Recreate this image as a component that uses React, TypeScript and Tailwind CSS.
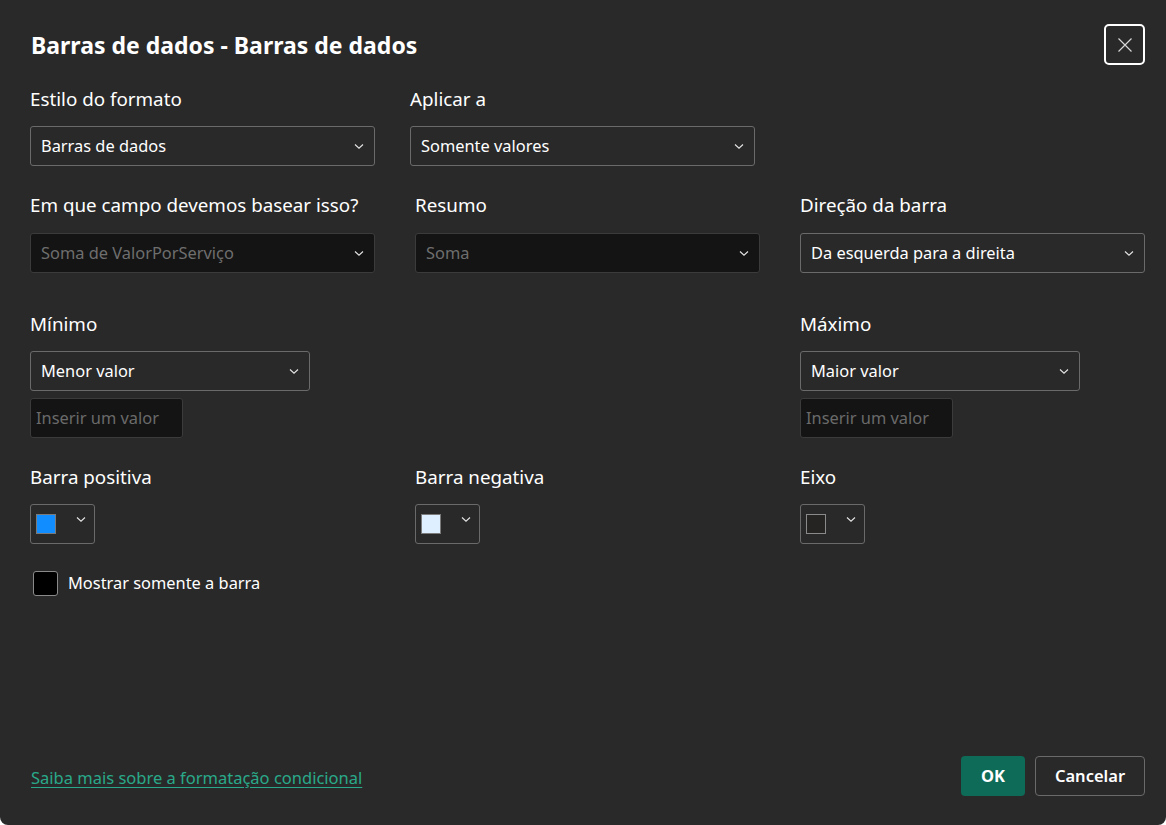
import React from "react";

function Chevron() {
  return (
    <svg width="12" height="12" viewBox="0 0 12 12" fill="none" className="shrink-0">
      <path d="M2 4.5 6 8.2 10 4.5" stroke="#e6e6e6" strokeWidth="1.1" />
    </svg>
  );
}

function Select({
  value,
  width,
  disabled = false,
}: {
  value: string;
  width: string;
  disabled?: boolean;
}) {
  return (
    <div
      className={`flex h-10 items-center justify-between rounded-[3px] border pl-[10px] pr-[9px] text-[16.4px] ${width} ${
        disabled
          ? "border-[#3b3b3b] bg-[#141414] text-[#6e6e6e]"
          : "border-[#6a6a6a] bg-[#292929] text-white"
      }`}
    >
      <span>{value}</span>
      <Chevron />
    </div>
  );
}

function ValueInput() {
  return (
    <div className="mt-[7px] flex h-10 w-[153px] items-center rounded-[3px] border border-[#3b3b3b] bg-[#141414] px-[5px] text-[16.4px] text-[#6a6a6a]">
      Inserir um valor
    </div>
  );
}

function ColorPicker({ color, dark = false }: { color: string; dark?: boolean }) {
  return (
    <div className="flex h-10 w-[65px] items-center justify-between rounded-[3px] border border-[#6a6a6a] pl-[5px] pr-[7px]">
      <div
        className={`h-5 w-5 border ${dark ? "border-[#8a8a8a]" : "border-[#7a7a7a]"}`}
        style={{ backgroundColor: color }}
      />
      <div className="-mt-[10px]">
        <Chevron />
      </div>
    </div>
  );
}

function Label({ children }: { children: React.ReactNode }) {
  return <div className="h-[26px] text-[18.8px] leading-[26px] text-white">{children}</div>;
}

export default function App() {
  return (
    <div
      className="relative h-[825px] w-[1166px] overflow-hidden rounded-b-[8px] bg-[#292929] text-white"
      style={{ fontFamily: '"Segoe UI", "Noto Sans", "Open Sans", sans-serif' }}
    >
      <div className="flex items-start justify-between pl-[31px] pr-[21px] pt-[24px]">
        <h1 className="mt-[6px] text-[23px] font-bold leading-[30px]">
          Barras de dados - Barras de dados
        </h1>
        <button className="flex h-[41px] w-[41px] items-center justify-center rounded-[5px] border-2 border-white">
          <svg width="16" height="16" viewBox="0 0 16 16" fill="none">
            <path d="M1.5 1.5 14.5 14.5M14.5 1.5 1.5 14.5" stroke="#d6d6d6" strokeWidth="1.2" />
          </svg>
        </button>
      </div>

      <div className="px-[30px]">
        <div className="mt-[21px] flex gap-[35px]">
          <div>
            <Label>Estilo do formato</Label>
            <div className="mt-[14px]">
              <Select value="Barras de dados" width="w-[345px]" />
            </div>
          </div>
          <div>
            <Label>Aplicar a</Label>
            <div className="mt-[14px]">
              <Select value="Somente valores" width="w-[345px]" />
            </div>
          </div>
        </div>

        <div className="mt-[26px] grid grid-cols-[385px_385px_345px]">
          <div>
            <Label>Em que campo devemos basear isso?</Label>
            <div className="mt-[15px]">
              <Select value="Soma de ValorPorServiço" width="w-[345px]" disabled />
            </div>
          </div>
          <div>
            <Label>Resumo</Label>
            <div className="mt-[15px]">
              <Select value="Soma" width="w-[345px]" disabled />
            </div>
          </div>
          <div>
            <Label>Direção da barra</Label>
            <div className="mt-[15px]">
              <Select value="Da esquerda para a direita" width="w-[345px]" />
            </div>
          </div>
        </div>

        <div className="mt-[38px] grid grid-cols-[385px_385px_345px]">
          <div>
            <Label>Mínimo</Label>
            <div className="mt-[14px]">
              <Select value="Menor valor" width="w-[280px]" />
            </div>
            <ValueInput />
          </div>
          <div />
          <div>
            <Label>Máximo</Label>
            <div className="mt-[14px]">
              <Select value="Maior valor" width="w-[280px]" />
            </div>
            <ValueInput />
          </div>
        </div>

        <div className="mt-[26px] grid grid-cols-[385px_385px_345px]">
          <div>
            <Label>Barra positiva</Label>
            <div className="mt-[14px]">
              <ColorPicker color="#118dff" />
            </div>
          </div>
          <div>
            <Label>Barra negativa</Label>
            <div className="mt-[14px]">
              <ColorPicker color="#deefff" />
            </div>
          </div>
          <div>
            <Label>Eixo</Label>
            <div className="mt-[14px]">
              <ColorPicker color="#252423" dark />
            </div>
          </div>
        </div>

        <label className="mt-[27px] flex items-center gap-[10px] pl-[3px]">
          <span className="h-[25px] w-[25px] rounded-[3px] border border-[#8a8a8a] bg-black" />
          <span className="text-[16.4px] text-white">Mostrar somente a barra</span>
        </label>
      </div>

      <div className="absolute bottom-[29px] left-0 right-0 flex items-center justify-between pl-[31px] pr-[21px]">
        <a className="mt-[4px] text-[16.5px] text-[#2aa98a] underline underline-offset-[3px]">
          Saiba mais sobre a formatação condicional
        </a>
        <div className="flex gap-[10px]">
          <button className="h-10 w-[64px] rounded-[4px] bg-[#0e6b58] text-[16.5px] font-bold text-white">
            OK
          </button>
          <button className="h-10 w-[110px] rounded-[4px] border border-[#6a6a6a] text-[16.5px] font-semibold text-white">
            Cancelar
          </button>
        </div>
      </div>
    </div>
  );
}
